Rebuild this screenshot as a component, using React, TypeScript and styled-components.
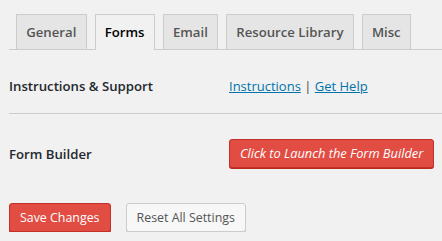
import React, { useState } from 'react'
import styled, { createGlobalStyle } from 'styled-components'

const GlobalStyle = createGlobalStyle`
  body {
    margin: 0;
    background: #f1f1f1;
    font-family: 'Open Sans', 'Noto Sans', sans-serif;
    color: #23282d;
  }
`

const Page = styled.div`
  padding-left: 9px;
`

const TabBar = styled.div`
  display: flex;
  height: 35px;
  padding: 14px 0 0 7px;
  border-bottom: 1px solid #ccc;
`

const Tab = styled.div<{ $active?: boolean }>`
  flex: none;
  white-space: nowrap;
  height: 35px;
  box-sizing: border-box;
  margin-right: 8px;
  padding: 5px 9.2px;
  line-height: 24px;
  font-size: 13.2px;
  font-weight: 600;
  border: 1px solid #ccc;
  border-bottom: none;
  background: ${p => (p.$active ? '#f1f1f1' : '#e5e5e5')};
  color: ${p => (p.$active ? '#000' : '#555')};
  cursor: pointer;
  position: relative;
  z-index: 1;
  ${p => p.$active && 'height: 36px; margin-bottom: -1px;'}
`

const Row = styled.div<{ $top: number; $bottom: number; $line?: boolean }>`
  display: flex;
  align-items: center;
  min-height: 20px;
  padding: ${p => p.$top}px 0 ${p => p.$bottom}px;
  border-bottom: ${p => (p.$line ? '1px solid #ccc' : 'none')};
`

const Label = styled.div`
  width: 220px;
  flex: none;
  white-space: nowrap;
  font-size: 13.2px;
  font-weight: 600;
  line-height: 20px;
`

const Links = styled.div`
  white-space: nowrap;
  font-size: 13px;
  line-height: 20px;
  color: #444;
  a {
    color: #0073aa;
    text-decoration: underline;
  }
`

const Button = styled.button<{ $primary?: boolean; $italic?: boolean }>`
  flex: none;
  white-space: nowrap;
  height: 29px;
  padding: 0 10px 1px;
  border-radius: 3px;
  font-family: inherit;
  font-size: ${p => (p.$italic ? 12.8 : 12.4)}px;
  font-style: ${p => (p.$italic ? 'italic' : 'normal')};
  border: 1px solid ${p => (p.$primary ? '#c3302a' : '#ccc')};
  background: ${p => (p.$primary ? '#e14d43' : '#f7f7f7')};
  color: ${p => (p.$primary ? '#fff' : '#555')};
  box-shadow: 0 1px 0 ${p => (p.$primary ? '#ba281e' : '#ccc')};
  cursor: pointer;
`

const Actions = styled.div`
  display: flex;
  gap: 15px;
  padding-top: 35px;
`

const tabs = ['General', 'Forms', 'Email', 'Resource Library', 'Misc']

export default function App() {
  const [active, setActive] = useState('Forms')
  return (
    <Page>
      <GlobalStyle />
      <TabBar>
        {tabs.map(t => (
          <Tab key={t} $active={t === active} onClick={() => setActive(t)}>
            {t}
          </Tab>
        ))}
      </TabBar>
      <Row $top={26} $bottom={17} $line>
        <Label>Instructions &amp; Support</Label>
        <Links>
          <a href="#">Instructions</a> | <a href="#">Get Help</a>
        </Links>
      </Row>
      <Row $top={25} $bottom={0}>
        <Label>Form Builder</Label>
        <Button $primary $italic>Click to Launch the Form Builder</Button>
      </Row>
      <Actions>
        <Button $primary>Save Changes</Button>
        <Button>Reset All Settings</Button>
      </Actions>
    </Page>
  )
}
